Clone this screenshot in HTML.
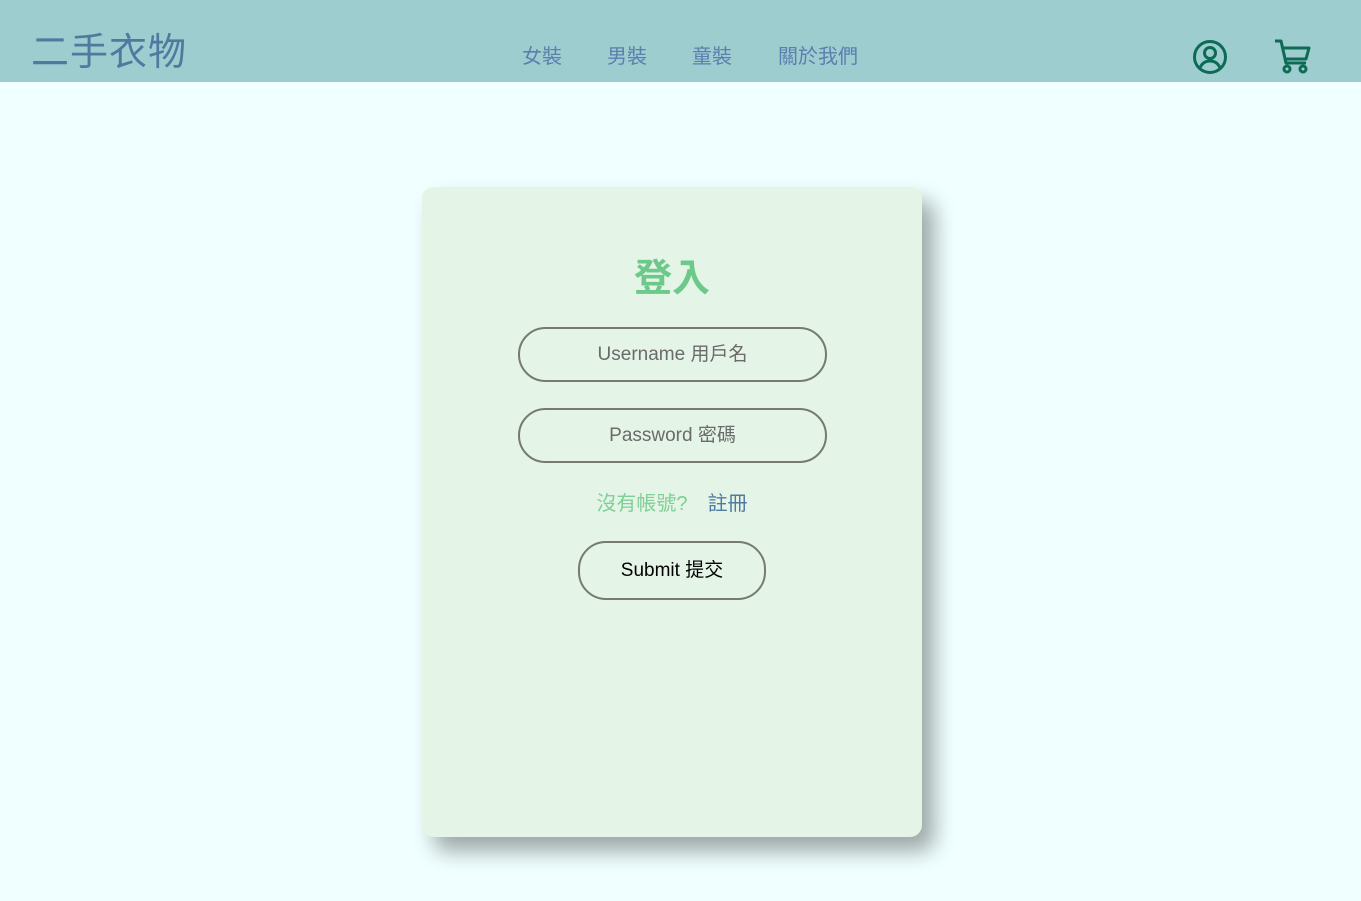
<!DOCTYPE html>
<html><head><meta charset="utf-8"><style>
*{box-sizing:border-box;margin:0;padding:0}
body{width:1361px;height:901px;background:#f0ffff;font-family:"Liberation Sans","Noto Sans CJK TC",sans-serif;position:relative;overflow:hidden}
.hdr{position:absolute;left:0;top:0;width:1361px;height:82px;background:#9ecdd0}
.logo{position:absolute;left:31px;top:30px;font-size:38px;color:#4f7aa0;letter-spacing:1px;line-height:46px}
.nav{position:absolute;top:45px;font-size:20px;color:#5b7fae;line-height:24px}
.card{position:absolute;left:422px;top:187px;width:500px;height:650px;background:#e4f4e6;border-radius:12px;box-shadow:12px 14px 22px rgba(0,0,0,.35)}
h1{position:absolute;top:69px;width:100%;text-align:center;font-size:38px;color:#6cc98a;font-weight:bold;line-height:46px}
.inp{position:absolute;left:96px;width:309px;height:55px;border:2px solid #757a74;border-radius:28px;text-align:center;line-height:51px;font-size:19px;color:#6b6b6b}
.reg{position:absolute;top:304px;width:100%;text-align:center;font-size:20px;line-height:26px}
.btn{position:absolute;left:156px;top:354px;width:188px;height:59px;border:2px solid #757a74;border-radius:28px;text-align:center;line-height:55px;font-size:19px;color:#000}
</style></head><body>
<div class="hdr">
<div class="logo">二手衣物</div>
<div class="nav" style="left:522px">女裝</div>
<div class="nav" style="left:607px">男裝</div>
<div class="nav" style="left:692px">童裝</div>
<div class="nav" style="left:778px">關於我們</div>
<svg style="position:absolute;left:1192px;top:39px" width="36" height="36" viewBox="0 0 36 36" fill="none" stroke="#0d6b55" stroke-width="3"><circle cx="18" cy="18" r="15.5"/><circle cx="18" cy="14" r="5.5"/><path d="M8 29c2-5 6-7 10-7s8 2 10 7"/></svg>
<svg style="position:absolute;left:1274px;top:38px" width="38" height="36" viewBox="0 0 38 36" fill="none" stroke="#0d6b55" stroke-width="3" stroke-linejoin="round"><path d="M1 3h6l5 22h20"/><path d="M9 10h26l-3 11H11"/><circle cx="13" cy="31" r="3"/><circle cx="29" cy="31" r="3"/></svg>
</div>
<div class="card">
<h1>登入</h1>
<div class="inp" style="top:140px">Username 用戶名</div>
<div class="inp" style="top:221px">Password 密碼</div>
<div class="reg"><span style="color:#7fcf97">沒有帳號?</span><span style="color:#4f7aa0;margin-left:20px">註冊</span></div>
<div class="btn">Submit 提交</div>
</div>
</body></html>
